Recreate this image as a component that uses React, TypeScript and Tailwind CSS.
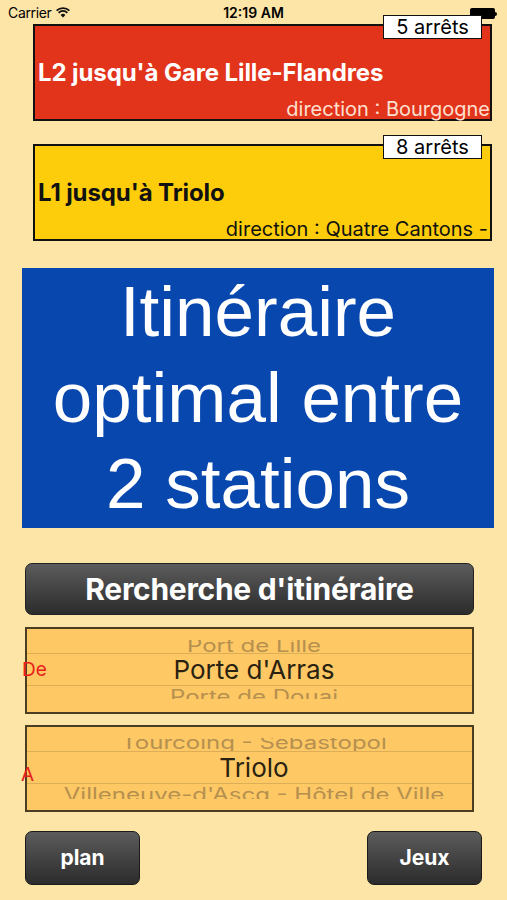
export default function App() {
  return (
    <div className="w-[507px] h-[900px] bg-[#fde4a7] overflow-hidden font-['Inter',sans-serif] text-black">
      {/* status bar */}
      <div className="relative h-[24px] flex items-center px-[8px] text-[14px]">
        <span className="tracking-tight">Carrier</span>
        <svg className="ml-[5px]" width="14" height="11" viewBox="0 0 14 11">
          <path d="M7 10.5 L4.6 7.9 A3.4 3.4 0 0 1 9.4 7.9 Z" fill="#111" />
          <path d="M2.6 5.8 A6.2 6.2 0 0 1 11.4 5.8" stroke="#111" strokeWidth="1.7" fill="none" />
          <path d="M0.6 3.7 A9 9 0 0 1 13.4 3.7" stroke="#111" strokeWidth="1.7" fill="none" />
        </svg>
        <span className="absolute left-0 right-0 text-center font-semibold text-[14px]">12:19 AM</span>
        <div className="absolute right-[10px] top-[8px] flex items-center">
          <div className="w-[25px] h-[11px] bg-black rounded-[2px]" />
          <div className="w-[2px] h-[4px] bg-black rounded-r-sm" />
        </div>
      </div>

      <div className="flex flex-col">
        {/* L2 card */}
        <div className="relative ml-[33px] w-[459px] h-[97px] bg-[#e2331b] border-2 border-[#111]">
          <div className="absolute -top-[11px] right-[8px] w-[99px] h-[24px] bg-white border border-[#111] flex items-center justify-center text-[20px] leading-none z-10">
            5 arrêts
          </div>
          <div className="absolute left-[3px] top-[35px] text-white font-bold text-[24px] leading-none tracking-[-0.1px]">
            L2 jusqu'à Gare Lille-Flandres
          </div>
          <div className="absolute right-0 top-[73px] text-[#fde0d0] text-[20px] leading-none whitespace-nowrap">
            direction : Bourgogne
          </div>
        </div>

        {/* L1 card */}
        <div className="relative mt-[23px] ml-[33px] w-[459px] h-[97px] bg-[#fdcd0c] border-2 border-[#111]">
          <div className="absolute -top-[11px] right-[8px] w-[99px] h-[24px] bg-white border border-[#111] flex items-center justify-center text-[20px] leading-none z-10">
            8 arrêts
          </div>
          <div className="absolute left-[3px] top-[35px] text-[#111] font-bold text-[24px] leading-none tracking-[-0.1px]">
            L1 jusqu'à Triolo
          </div>
          <div className="absolute right-[2px] top-[73px] text-[#111] text-[20px] leading-none whitespace-nowrap">
            direction : Quatre Cantons -
          </div>
        </div>

        {/* blue banner */}
        <div className="mt-[27px] ml-[22px] w-[472px] h-[260px] bg-[#0747ae] flex flex-col items-center justify-center text-white font-['Liberation_Sans',sans-serif] text-[71px] leading-[86px]">
          <div>Itinéraire</div>
          <div>optimal entre</div>
          <div>2 stations</div>
        </div>

        {/* search button */}
        <button className="mt-[35px] ml-[25px] w-[449px] h-[52px] rounded-[7px] border border-[#222] bg-gradient-to-b from-[#5c5c5c] to-[#2c2c2c] text-white font-bold text-[30px] tracking-[-0.3px] flex items-center justify-center">
          Rercherche d'itinéraire
        </button>

        {/* picker De */}
        <div className="relative mt-[12px]">
          <span className="absolute left-[22px] top-[33px] text-[#e8201a] text-[19px] leading-none z-10">De</span>
          <Picker above="Port de Lille" current="Porte d'Arras" below="Porte de Douai" variant="a" />
        </div>

        {/* picker A */}
        <div className="relative mt-[11px]">
          <span className="absolute left-[21px] top-[40px] text-[#e8201a] text-[19px] leading-none z-10">A</span>
          <Picker above="Tourcoing - Sébastopol" current="Triolo" below="Villeneuve-d'Ascq - Hôtel de Ville" variant="b" />
        </div>

        {/* bottom buttons */}
        <div className="mt-[19px] ml-[25px] w-[457px] flex justify-between">
          <button className="w-[115px] h-[54px] rounded-[7px] border border-[#1a1a1a] bg-gradient-to-b from-[#5c5c5c] to-[#2c2c2c] text-white font-bold text-[21px] flex items-center justify-center">
            plan
          </button>
          <button className="w-[115px] h-[54px] rounded-[7px] border border-[#1a1a1a] bg-gradient-to-b from-[#5c5c5c] to-[#2c2c2c] text-white font-bold text-[21px] flex items-center justify-center">
            Jeux
          </button>
        </div>
      </div>
    </div>
  );
}

function Picker({ above, current, below, variant }: { above: string; current: string; below: string; variant: 'a' | 'b' }) {
  return (
    <div className="ml-[25px] w-[449px] h-[87px] bg-[#fec865] border-2 border-[#4a3d22] flex flex-col overflow-hidden pl-[9px]">
      <div className="h-[24px] pt-[11px] flex flex-col">
        <div className="flex-1 overflow-hidden flex items-end justify-center">
          <span
            className={
              variant === 'a'
                ? 'block text-[24px] leading-none text-[#b5904f] whitespace-nowrap scale-y-[0.75] origin-bottom translate-y-[2px]'
                : 'block text-[24px] leading-none text-[#b5904f] whitespace-nowrap scale-y-[0.75] origin-bottom translate-y-[1px]'
            }
          >
            {above}
          </span>
        </div>
      </div>
      <div className="h-[33px] -ml-[9px] pl-[9px] border-y border-[#dcae55] flex items-center justify-center text-[26px] text-[#2a2210] leading-none">
        {current}
      </div>
      <div className={variant === 'a' ? 'h-[13px] overflow-hidden flex items-start justify-center' : 'h-[15px] overflow-hidden flex items-start justify-center'}>
        <span className="block text-[24px] leading-none text-[#b5904f] whitespace-nowrap scale-y-[0.75] origin-top translate-y-[2px]">
          {below}
        </span>
      </div>
    </div>
  );
}
